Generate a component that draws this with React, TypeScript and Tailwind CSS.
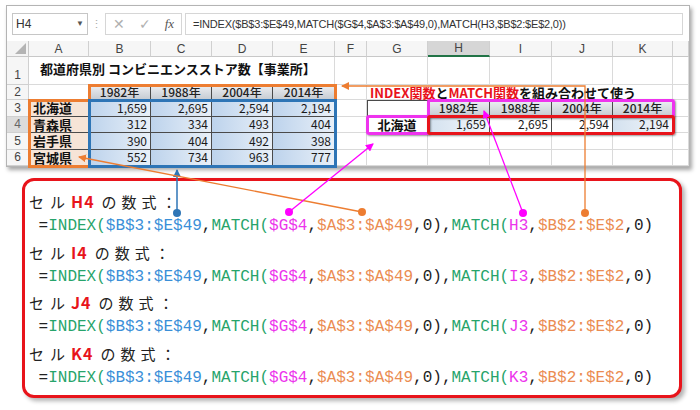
import React from "react"
import clsx from "clsx"

// grid placement lookups (full class names so tailwind picks them up)
const COL = ["", "col-start-1", "col-start-2", "col-start-3", "col-start-4", "col-start-5", "col-start-6", "col-start-7", "col-start-8", "col-start-9", "col-start-10", "col-start-11", "col-start-12", "col-start-13"]
const ROW = ["", "row-start-1", "row-start-2", "row-start-3", "row-start-4", "row-start-5", "row-start-6", "row-start-7"]
const SPAN: Record<number, string> = { 1: "", 4: "col-span-4", 5: "col-span-5" }

const grid = "border-r border-b border-[#dadada]"
const dark = "border-r border-b border-[#4a4a4a]"
const jp = "font-['Noto_Sans_CJK_JP',sans-serif]"

type CellProps = {
  r: number
  c: number
  span?: number
  className?: string
  children?: React.ReactNode
}

const Cell = ({ r, c, span = 1, className, children }: CellProps) => (
  <div className={clsx(ROW[r], COL[c], SPAN[span], "flex items-center whitespace-nowrap min-w-0 leading-none", className)}>
    {children}
  </div>
)

const years = ["1982年", "1988年", "2004年", "2014年"]
const prefs = ["北海道", "青森県", "岩手県", "宮城県"]
const data = [
  ["1,659", "2,695", "2,594", "2,194"],
  ["312", "334", "493", "404"],
  ["390", "404", "492", "398"],
  ["552", "734", "963", "777"],
]
const letters = ["A", "B", "C", "D", "E", "F", "G", "H", "I", "J", "K", ""]

const Sheet = () => {
  const cells: React.ReactNode[] = []

  // column headers
  cells.push(
    <Cell key="corner" r={1} c={1} className="bg-[#f4f4f4] border-r border-b border-[#c8c8c8] justify-end items-end p-[2px]">
      <svg width="11" height="11" viewBox="0 0 11 11">
        <path d="M11 0 L11 11 L0 11 Z" fill="#b4b4b4" />
      </svg>
    </Cell>
  )
  letters.forEach((l, i) => {
    const sel = l === "H"
    cells.push(
      <Cell
        key={"h" + i}
        r={1}
        c={i + 2}
        className={clsx(
          "justify-center text-[12px] text-[#444] font-['Liberation_Sans',sans-serif] border-r border-[#d0d0d0]",
          sel ? "bg-[#d6d6d6] border-b-2 border-b-[#217346]" : "bg-[#f6f6f6] border-b border-b-[#c8c8c8]"
        )}
      >
        {l}
      </Cell>
    )
  })

  // row headers
  for (let r = 2; r <= 7; r++) {
    cells.push(
      <Cell
        key={"rh" + r}
        r={r}
        c={1}
        className={clsx(
          "justify-center text-[12px] font-['Liberation_Sans',sans-serif] border-r border-b border-[#d0d0d0]",
          r === 5 ? "bg-[#dcdcdc] text-[#666]" : "bg-[#f6f6f6] text-[#444]",
          r === 2 && "items-end pb-[3px]"
        )}
      >
        {r - 1}
      </Cell>
    )
  }

  // row 1
  cells.push(
    <Cell key="title" r={2} c={2} span={5} className={clsx(grid, "items-start pt-[5px] pl-[11px] text-[13px] font-bold text-[#111]", jp)}>
      都道府県別 コンビニエンスストア数【事業所】
    </Cell>
  )
  for (let c = 7; c <= 13; c++) cells.push(<Cell key={"r1" + c} r={2} c={c} className={grid} />)

  // row 2
  cells.push(<Cell key="a2" r={3} c={2} className={grid} />)
  years.forEach((y, i) =>
    cells.push(
      <Cell key={"y" + i} r={3} c={i + 3} className={clsx(dark, "justify-center text-[12px] font-medium text-[#222] bg-linear-to-b from-[#eef0f3] to-[#c7ccd3]", jp)}>
        {y}
      </Cell>
    )
  )
  cells.push(<Cell key="f2" r={3} c={7} className={grid} />)
  cells.push(
    <Cell key="note" r={3} c={8} span={5} className={clsx(grid, "pl-[3px] text-[13px] font-bold text-[#111]", jp)}>
      <span className="text-[#e8141b]">INDEX関数</span>と<span className="text-[#e8141b]">MATCH関数</span>を組み合わせて使う
    </Cell>
  )
  cells.push(<Cell key="l2" r={3} c={13} className={grid} />)

  // rows 3-6
  for (let i = 0; i < 4; i++) {
    const r = i + 4
    cells.push(
      <Cell key={"p" + i} r={r} c={2} className={clsx(dark, "pl-[4px] text-[13px] font-bold text-[#111] bg-[#f6e4d7]", jp)}>
        {prefs[i]}
      </Cell>
    )
    data[i].forEach((v, j) =>
      cells.push(
        <Cell key={"d" + i + j} r={r} c={j + 3} className={clsx(dark, "justify-end pr-[3px] text-[12px] text-[#1a1a1a] bg-linear-to-r from-[#bdd3ec] to-[#e9f0f8]", jp)}>
          {v}
        </Cell>
      )
    )
    cells.push(<Cell key={"f" + i} r={r} c={7} className={grid} />)

    // lookup side
    if (i === 0) {
      cells.push(<Cell key="g3" r={r} c={8} className={clsx(dark, "bg-white border-l border-t")} />)
      years.forEach((y, j) =>
        cells.push(
          <Cell key={"ry" + j} r={r} c={j + 9} className={clsx(dark, "justify-center text-[12px] font-medium text-[#222] bg-linear-to-b from-[#eef0f3] to-[#c7ccd3]", jp)}>
            {y}
          </Cell>
        )
      )
    } else if (i === 1) {
      cells.push(
        <Cell key="g4" r={r} c={8} className={clsx(dark, "justify-center text-[13px] font-bold text-[#111] bg-white", jp)}>
          北海道
        </Cell>
      )
      data[0].forEach((v, j) =>
        cells.push(
          <Cell
            key={"rv" + j}
            r={r}
            c={j + 9}
            className={clsx(
              dark,
              "justify-end pr-[3px] text-[12px] text-[#1a1a1a]",
              j === 0 || j === 3 ? "bg-linear-to-r from-[#d3e1ef] to-[#f4f7fb]" : "bg-white",
              jp
            )}
          >
            {v}
          </Cell>
        )
      )
    } else {
      for (let c = 8; c <= 12; c++) cells.push(<Cell key={"e" + i + c} r={r} c={c} className={grid} />)
    }
    cells.push(<Cell key={"l" + i} r={r} c={13} className={grid} />)
  }

  return (
    <div className="ml-[6px] mt-[5px] w-[684px] border border-[#b4b4b4] bg-white shadow-[2px_3px_4px_rgba(0,0,0,0.35)]">
      {/* formula bar */}
      <div className="flex h-[35px] items-start pl-[5px] pt-[7px] font-['Liberation_Sans',sans-serif]">
        <div className="flex h-[22px] w-[76px] items-center justify-between border border-[#c6c6c6] px-[3px] text-[12px] text-[#333]">
          <span>H4</span>
          <span className="text-[8px] text-[#555]">▼</span>
        </div>
        <div className="flex h-[22px] w-[17px] items-center justify-center text-[11px] text-[#aaa]">⋮</div>
        <div className="flex h-[22px] w-[77px] items-center justify-around border border-[#d6d6d6] text-[#b0b0b0]">
          <span className="text-[14px]">✕</span>
          <span className="text-[14px]">✓</span>
          <span className="font-['Liberation_Serif',serif] text-[13px] italic text-[#555]">fx</span>
        </div>
        <div className="ml-[3px] flex h-[22px] w-[498px] items-center border border-[#d6d6d6] pl-[7px] text-[11px] tracking-[-0.2px] text-[#333]">
          =INDEX($B$3:$E$49,MATCH($G$4,$A$3:$A$49,0),MATCH(H3,$B$2:$E$2,0))
        </div>
      </div>
      {/* cells */}
      <div className="grid grid-cols-[22px_60px_62px_61px_61px_62px_32px_61px_62px_62px_61px_60px_16px] grid-rows-[16px_28px_15px_16.5px_16.5px_16.5px_16.5px]">
        {cells}
        {/* highlight frames */}
        <div className="row-start-3 col-start-3 col-span-4 z-10 -m-[1.5px] border-[3px] border-[#ed7d31] pointer-events-none" />
        <div className="row-start-4 row-span-4 col-start-2 z-10 -m-[1.5px] border-[3px] border-[#ed7d31] pointer-events-none" />
        <div className="row-start-4 row-span-4 col-start-3 col-span-4 z-10 -m-[1.5px] border-[3px] border-[#2e75b6] pointer-events-none" />
        <div className="row-start-4 col-start-9 col-span-4 z-10 -m-[1.5px] rounded-[3px] border-[3px] border-[#ee33ee] shadow-[1px_1px_2px_rgba(0,0,0,0.4)] pointer-events-none" />
        <div className="row-start-5 col-start-8 z-10 -m-[1.5px] rounded-[3px] border-[3px] border-[#ee33ee] shadow-[1px_1px_2px_rgba(0,0,0,0.4)] pointer-events-none" />
        <div className="row-start-5 col-start-9 col-span-4 z-10 -m-[1.5px] rounded-[3px] border-[3px] border-[#e8141b] shadow-[1px_1px_2px_rgba(0,0,0,0.4)] pointer-events-none" />
      </div>
    </div>
  )
}

const G = ({ children }: { children: React.ReactNode }) => <span className="text-[#27a46b]">{children}</span>
const B = ({ children }: { children: React.ReactNode }) => <span className="text-[#3a8fd8]">{children}</span>
const M = ({ children }: { children: React.ReactNode }) => <span className="text-[#ec34ec]">{children}</span>
const O = ({ children }: { children: React.ReactNode }) => <span className="text-[#eb8c52]">{children}</span>

const FormulaBox = () => (
  <div className="ml-[22px] mt-[11px] h-[220px] w-[660px] rounded-[12px] border-[3px] border-[#e8141b] bg-white pl-[4px] pt-[8px] shadow-[3px_3px_4px_rgba(0,0,0,0.3)] leading-[25.3px] text-[#222]">
    {["H4", "I4", "J4", "K4"].map((cell) => (
      <React.Fragment key={cell}>
        <div className={clsx("h-[25.3px] text-[15px]", jp)}>
          <span className="tracking-[6px]">セル</span>
          <span className="mr-[7px] font-bold text-[16px] text-[#e8141b] tracking-[1px]">{cell}</span>
          <span className="tracking-[5px]">の数式：</span>
        </div>
        <div className="h-[25.3px] whitespace-pre font-['Liberation_Mono',monospace] text-[16px]">
          {" ="}
          <G>INDEX(</G>
          <B>$B$3:$E$49</B>,<G>MATCH(</G>
          <M>$G$4</M>,<O>$A$3:$A$49</O>,0),<G>MATCH(</G>
          <M>{cell[0] + "3"}</M>,<O>$B$2:$E$2</O>,0)
        </div>
      </React.Fragment>
    ))}
  </div>
)

const Arrows = () => (
  <svg className="pointer-events-none absolute left-0 top-0 z-20" width="700" height="410" viewBox="0 0 700 410">
    <defs>
      <marker id="ao" markerWidth="8" markerHeight="8" refX="7" refY="4" orient="auto" markerUnits="userSpaceOnUse">
        <path d="M0 0 L8 4 L0 8 Z" fill="#ed7d31" />
      </marker>
      <marker id="ab" markerWidth="8" markerHeight="8" refX="7" refY="4" orient="auto" markerUnits="userSpaceOnUse">
        <path d="M0 0 L8 4 L0 8 Z" fill="#2e75b6" />
      </marker>
      <marker id="am" markerWidth="8" markerHeight="8" refX="7" refY="4" orient="auto" markerUnits="userSpaceOnUse">
        <path d="M0 0 L8 4 L0 8 Z" fill="#f0f" />
      </marker>
    </defs>
    {/* blue */}
    <line x1="177" y1="213" x2="177" y2="170" stroke="#2e75b6" strokeWidth="1.5" markerEnd="url(#ab)" />
    <circle cx="177" cy="213" r="4" fill="#2e75b6" />
    {/* orange to A6 */}
    <line x1="362" y1="212" x2="79" y2="157" stroke="#ed7d31" strokeWidth="1.3" markerEnd="url(#ao)" />
    <circle cx="362" cy="212" r="4" fill="#ed7d31" />
    {/* magenta to G4 */}
    <line x1="289" y1="212" x2="373" y2="144" stroke="#f0f" strokeWidth="1.3" markerEnd="url(#am)" />
    <circle cx="289" cy="212" r="4" fill="#f0f" />
    {/* magenta to H3 */}
    <line x1="523" y1="213" x2="484" y2="111" stroke="#f0f" strokeWidth="1.3" markerEnd="url(#am)" />
    <circle cx="523" cy="213" r="4" fill="#f0f" />
    {/* orange to B2:E2 */}
    <polyline points="585,213 585,86 342,86" fill="none" stroke="#ed7d31" strokeWidth="1.3" markerEnd="url(#ao)" />
    <circle cx="585" cy="213" r="4" fill="#ed7d31" />
  </svg>
)

export default function App() {
  return (
    <div className="relative flex h-[410px] w-[700px] flex-col overflow-hidden bg-white">
      <Sheet />
      <FormulaBox />
      <Arrows />
    </div>
  )
}
